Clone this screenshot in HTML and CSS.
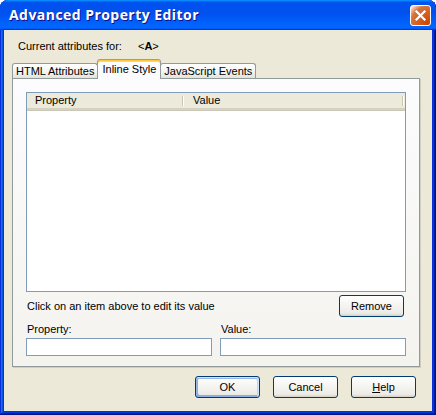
FILE: index.html
```html
<!DOCTYPE html>
<html lang="en">
<head>
    <meta charset="UTF-8" />
    <title>Advanced Property Editor</title>
    <link rel="stylesheet" href="styles.css">
</head>
<body>
<div class="window">
    <div class="titlebar">
        <span class="title">Advanced Property Editor</span>
        <button class="close-btn" aria-label="Close">
            <svg width="13" height="13" viewBox="0 0 13 13">
                <path d="M2.5 2.5 L10.5 10.5 M10.5 2.5 L2.5 10.5" stroke="#fff" stroke-width="2.2" stroke-linecap="square" fill="none"/>
            </svg>
        </button>
    </div>

    <div class="client">
        <div class="attr-row">
            <span>Current attributes for:</span>
            <span class="tag">&lt;<b>A</b>&gt;</span>
        </div>

        <div class="tabs">
            <div class="tab">HTML Attributes</div>
            <div class="tab active">Inline Style</div>
            <div class="tab">JavaScript Events</div>
        </div>

        <div class="panel">
            <div class="listview">
                <div class="lv-header">
                    <div class="lv-col col-prop">Property</div>
                    <span class="lv-sep"></span>
                    <div class="lv-col col-val">Value</div>
                    <span class="lv-sep"></span>
                </div>
            </div>

            <div class="hint-row">
                <span>Click on an item above to edit its value</span>
                <button class="btn">Remove</button>
            </div>

            <div class="fields">
                <label class="field">
                    <span class="field-label">Property:</span>
                    <input type="text">
                </label>
                <label class="field">
                    <span class="field-label">Value:</span>
                    <input type="text">
                </label>
            </div>
        </div>

        <footer class="dialog-buttons">
            <button class="btn default">OK</button>
            <button class="btn">Cancel</button>
            <button class="btn"><u>H</u>elp</button>
        </footer>
    </div>
</div>
</body>
</html>
```

FILE: styles.css
```css
:root {
    --face: #ECE9D8;
    --frame: #0831D9;
    --tab-border: #919B9C;
    --field-border: #7F9DB9;
    --btn-border: #003C74;
    --font: 'Liberation Sans', Arial, sans-serif;
}

*, *::before, *::after { box-sizing: border-box; margin: 0; }

body {
    font-family: var(--font);
    font-size: 11px;
    color: #000;
    background: #fff;
}

.window {
    width: 436px; height: 415px;
    display: flex; flex-direction: column;
    background: var(--frame);
    border-radius: 8px 8px 0 0;
    overflow: hidden;
    box-shadow: inset -1px -1px #00138C, inset 1px 1px #0831D9,
                inset -2px -2px #001EA0, inset 2px 2px #166AEE,
                inset -3px -3px #003BDA, inset 3px 3px #0855DD;
}

.titlebar {
    height: 30px; flex: none;
    display: flex; align-items: center; justify-content: space-between;
    padding: 0 5px 0 9px;
    background: linear-gradient(180deg, #0997FF, #0053EE 8%, #0050EE 40%, #0066FF 88%, #0066FF 93%, #005BFF 95%, #003DD7 96%, #003DD7);
}
.title {
    font-family: 'Open Sans', 'DejaVu Sans', sans-serif;
    font-weight: 700; font-size: 14px;
    letter-spacing: 0.45px;
    color: #fff;
    text-shadow: 1px 1px #0F1089;
    margin-top: -1px;
}
.close-btn {
    width: 21px; height: 21px; padding: 0;
    display: flex; align-items: center; justify-content: center;
    border: 1px solid #fff; border-radius: 3px;
    background: radial-gradient(circle at 90% 90%, #CC4600 0, #DC6527 55%, #CD7546 70%, #FFCCB2 90%, #fff 100%);
}

.client {
    flex: 1;
    margin: 0 4px 4px;
    background: var(--face);
    padding: 10px 12px 13px 8px;
    display: flex; flex-direction: column;
}

.attr-row {
    height: 13px; line-height: 13px;
    padding-left: 6px;
    display: flex;
}
.attr-row .tag { margin-left: 16px; }

.tabs {
    height: 19px; margin-top: 6px;
    display: flex; align-items: flex-end;
    position: relative; z-index: 1;
}
.tab {
    height: 15px; line-height: 14px;
    padding: 0 3px;
    border: 1px solid var(--tab-border); border-bottom: none;
    border-radius: 3px 3px 0 0;
    background: linear-gradient(180deg, #fff, #F3F3EF 60%, #E3E2DA);
}
.tab + .tab { margin-left: -1px; }
.tab.active {
    height: 20px; line-height: 18px;
    margin-bottom: -1px;
    padding: 0 4px;
    background: #FCFCFE;
    border-top: 1px solid #E68B2C;
    box-shadow: inset 0 1px #FFC73C, inset 0 2px #F5D68A;
}

.panel {
    border: 1px solid var(--tab-border);
    box-shadow: 1px 1px 0 #D0CEBF;
    background: linear-gradient(180deg, #FCFCFE, #F4F3EE);
    padding: 13px 13px 10px;
}

.listview {
    height: 200px;
    border: 1px solid var(--field-border);
    background: #fff;
}
.lv-header {
    height: 17px;
    display: flex; align-items: center;
    background: #EBEADB;
    border-bottom: 2px solid #D6D2C2;
    box-shadow: 0 1px #CBC7B8;
}
.lv-col { line-height: 15px; }
.col-prop { width: 155px; padding-left: 8px; }
.col-val { flex: 1; padding-left: 8px; }
.lv-sep {
    width: 1px; height: 10px;
    background: #C7C5B2;
    box-shadow: 1px 0 #fff;
    margin-right: 2px;
}

.hint-row {
    margin-top: 3px; height: 22px;
    display: flex; align-items: center; justify-content: space-between;
    padding: 0 2px 0 1px;
}

.fields {
    margin-top: 6px;
    display: grid; grid-template-columns: 1fr 1fr; gap: 8px;
}
.field { display: flex; flex-direction: column; }
.field-label { height: 13px; line-height: 13px; padding-left: 1px; margin-bottom: 2px; }
.field input {
    height: 18px;
    border: 1px solid var(--field-border);
    background: #fff;
    font: inherit;
}

.btn {
    width: 65px; height: 22px;
    font: inherit; color: #000;
    border: 1px solid var(--btn-border);
    border-radius: 3px;
    background: linear-gradient(180deg, #fff, #ECEBE6 86%, #D6D0C5);
    padding: 0;
}
.btn.default {
    box-shadow: inset -1px 1px #CEE7FF, inset 1px 2px #98B8EA, inset -2px 2px #BCD4F6, inset 1px -1px #89ADE4, inset 2px -2px #89ADE4;
}

.dialog-buttons {
    margin-top: 9px;
    display: flex; justify-content: flex-end; gap: 13px;
    padding-right: 4px;
}
```
